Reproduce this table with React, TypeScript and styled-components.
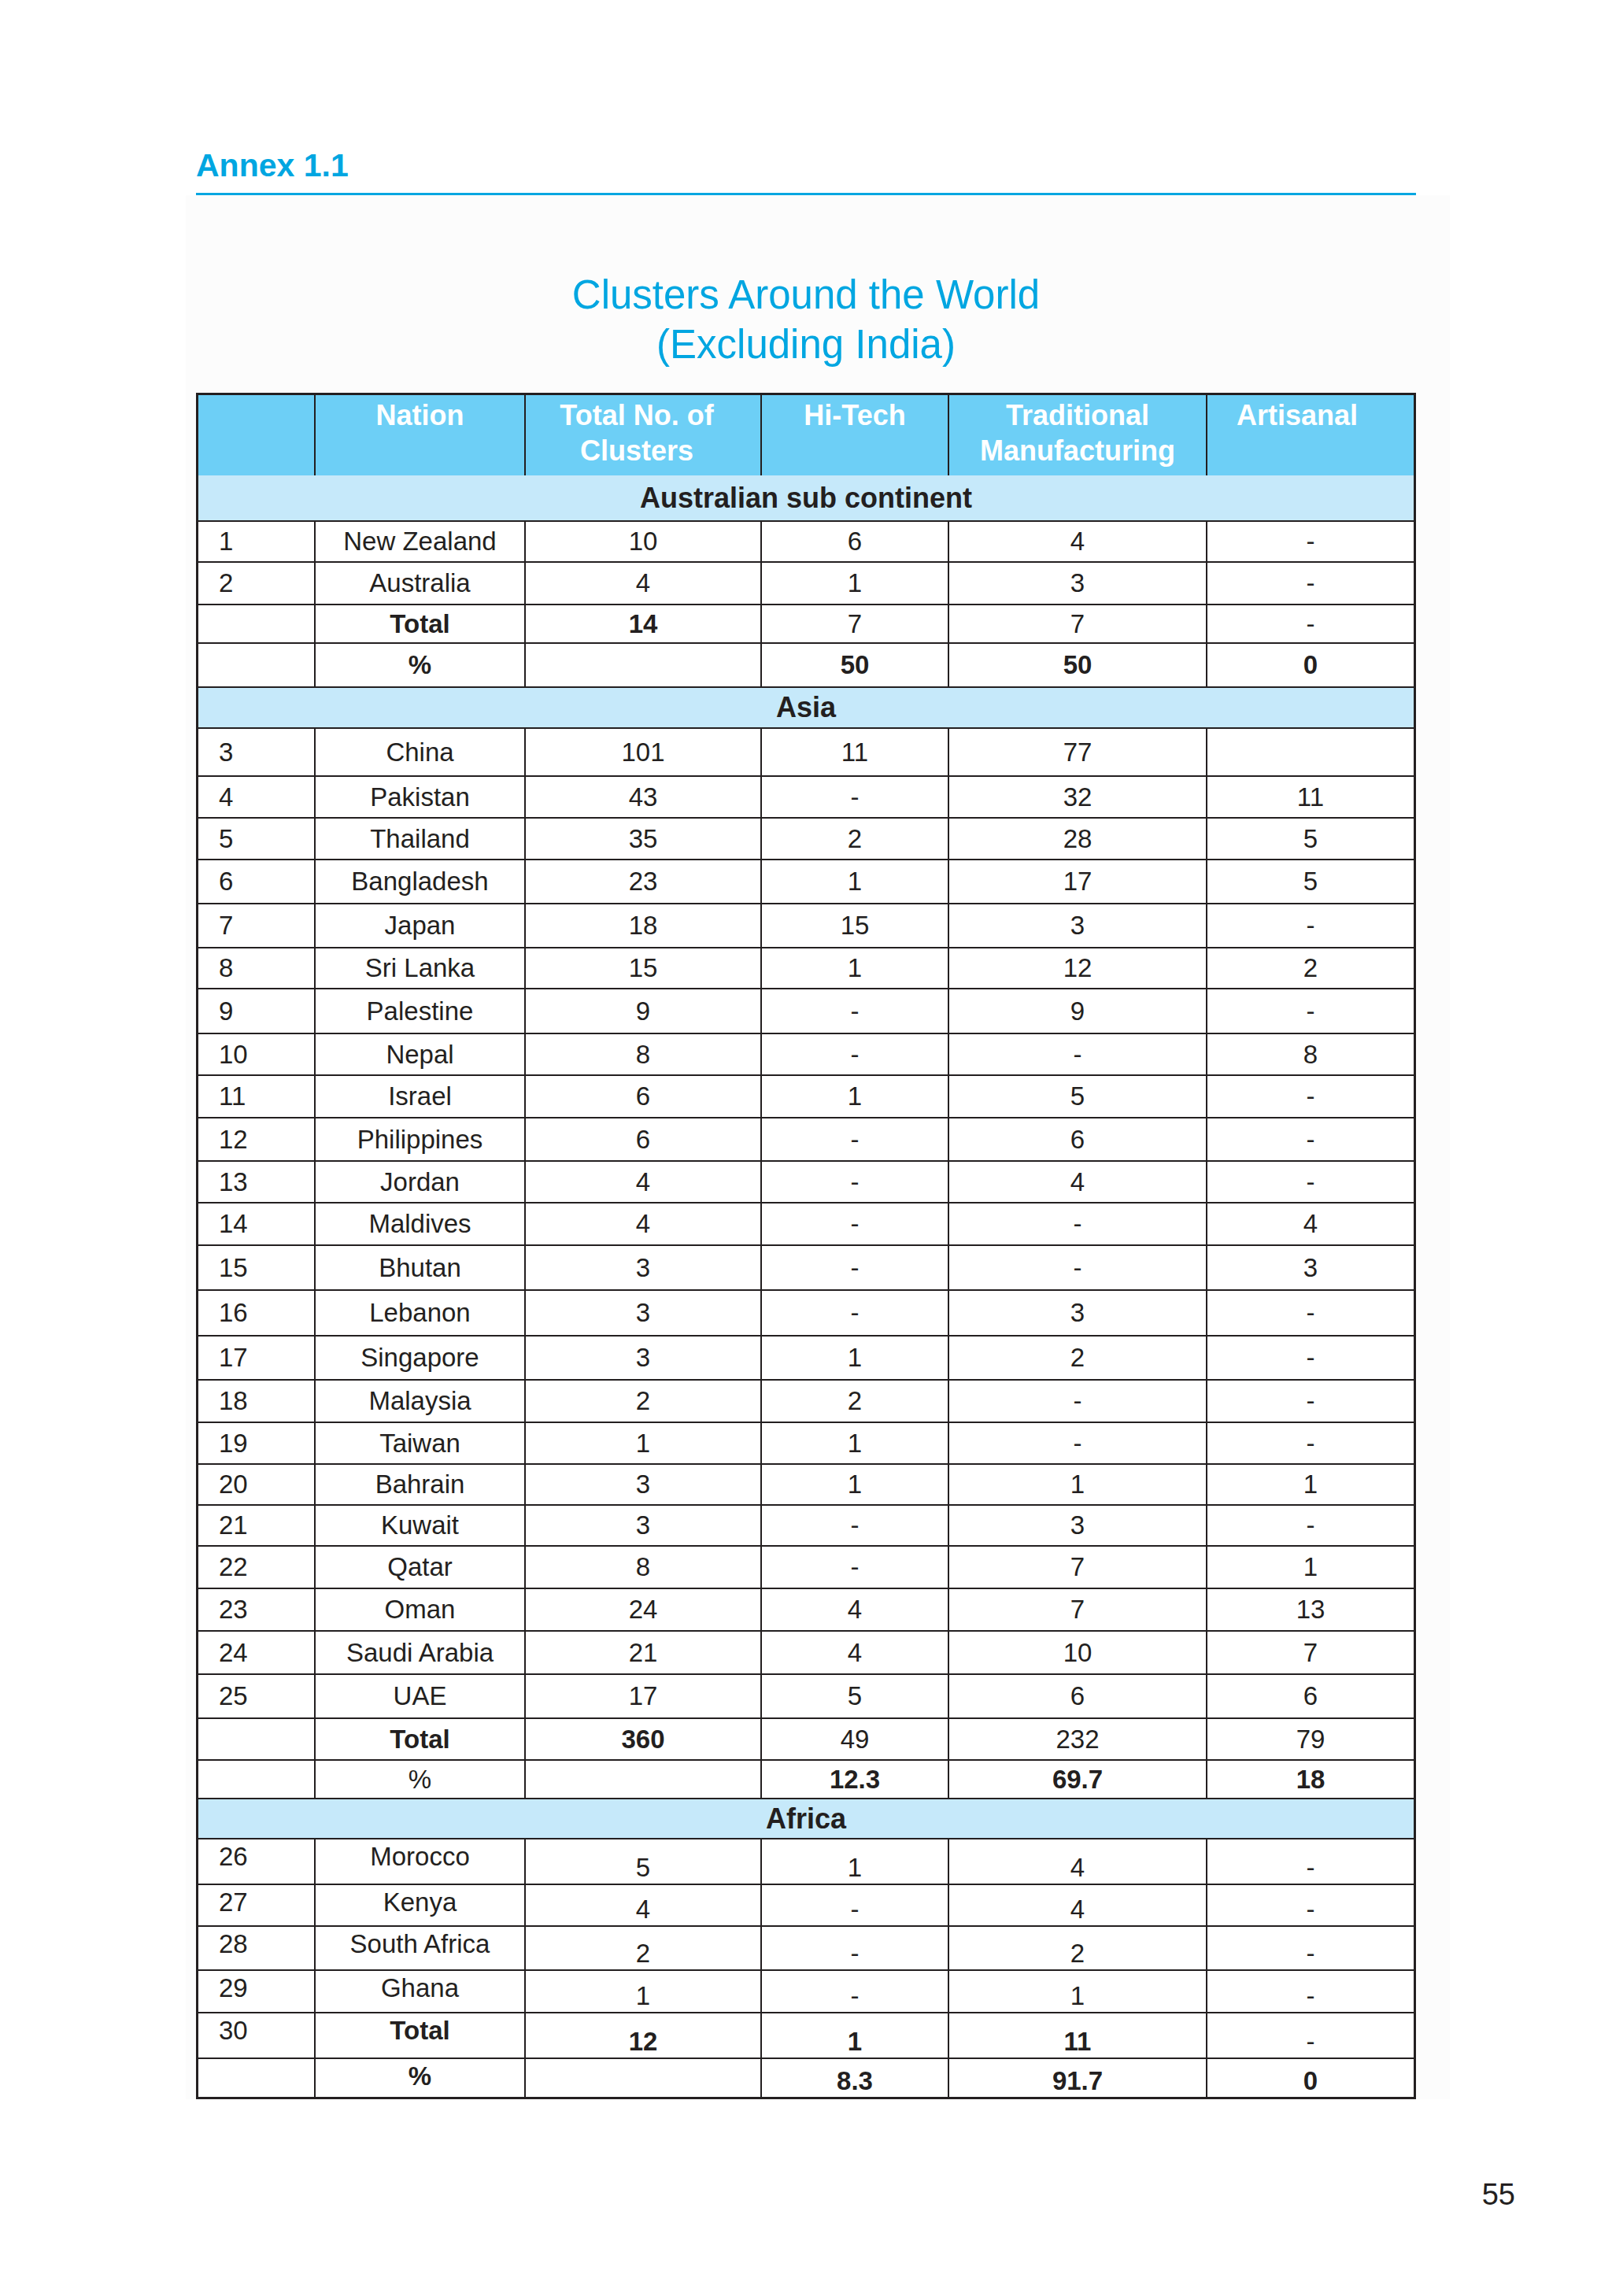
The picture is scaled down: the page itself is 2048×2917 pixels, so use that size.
import React from 'react';
import styled, { createGlobalStyle } from 'styled-components';

type Row = { cells: string[]; h: number; b?: number[] };
type Section = { title: string; h: number; split?: boolean; rows: Row[] };

const ink = '#231f20';
const cyan = '#00a6e1';

const COLS = '149px 267px 300px 238px 328px 262px';

const sections: Section[] = [
  {
    title: 'Australian sub continent',
    h: 59,
    rows: [
      { cells: ['1', 'New Zealand', '10', '6', '4', '-'], h: 52 },
      { cells: ['2', 'Australia', '4', '1', '3', '-'], h: 54 },
      { cells: ['', 'Total', '14', '7', '7', '-'], h: 49, b: [1, 2] },
      { cells: ['', '%', '', '50', '50', '0'], h: 56, b: [1, 3, 4, 5] },
    ],
  },
  {
    title: 'Asia',
    h: 52,
    rows: [
      { cells: ['3', 'China', '101', '11', '77', ''], h: 61 },
      { cells: ['4', 'Pakistan', '43', '-', '32', '11'], h: 53 },
      { cells: ['5', 'Thailand', '35', '2', '28', '5'], h: 53 },
      { cells: ['6', 'Bangladesh', '23', '1', '17', '5'], h: 56 },
      { cells: ['7', 'Japan', '18', '15', '3', '-'], h: 56 },
      { cells: ['8', 'Sri Lanka', '15', '1', '12', '2'], h: 52 },
      { cells: ['9', 'Palestine', '9', '-', '9', '-'], h: 57 },
      { cells: ['10', 'Nepal', '8', '-', '-', '8'], h: 53 },
      { cells: ['11', 'Israel', '6', '1', '5', '-'], h: 54 },
      { cells: ['12', 'Philippines', '6', '-', '6', '-'], h: 55 },
      { cells: ['13', 'Jordan', '4', '-', '4', '-'], h: 53 },
      { cells: ['14', 'Maldives', '4', '-', '-', '4'], h: 54 },
      { cells: ['15', 'Bhutan', '3', '-', '-', '3'], h: 57 },
      { cells: ['16', 'Lebanon', '3', '-', '3', '-'], h: 58 },
      { cells: ['17', 'Singapore', '3', '1', '2', '-'], h: 56 },
      { cells: ['18', 'Malaysia', '2', '2', '-', '-'], h: 54 },
      { cells: ['19', 'Taiwan', '1', '1', '-', '-'], h: 53 },
      { cells: ['20', 'Bahrain', '3', '1', '1', '1'], h: 52 },
      { cells: ['21', 'Kuwait', '3', '-', '3', '-'], h: 52 },
      { cells: ['22', 'Qatar', '8', '-', '7', '1'], h: 54 },
      { cells: ['23', 'Oman', '24', '4', '7', '13'], h: 54 },
      { cells: ['24', 'Saudi Arabia', '21', '4', '10', '7'], h: 55 },
      { cells: ['25', 'UAE', '17', '5', '6', '6'], h: 56 },
      { cells: ['', 'Total', '360', '49', '232', '79'], h: 53, b: [1, 2] },
      { cells: ['', '%', '', '12.3', '69.7', '18'], h: 49, b: [3, 4, 5] },
    ],
  },
  {
    title: 'Africa',
    h: 51,
    split: true,
    rows: [
      { cells: ['26', 'Morocco', '5', '1', '4', '-'], h: 58 },
      { cells: ['27', 'Kenya', '4', '-', '4', '-'], h: 53 },
      { cells: ['28', 'South Africa', '2', '-', '2', '-'], h: 56 },
      { cells: ['29', 'Ghana', '1', '-', '1', '-'], h: 54 },
      { cells: ['30', 'Total', '12', '1', '11', '-'], h: 58, b: [1, 2, 3, 4] },
      { cells: ['', '%', '', '8.3', '91.7', '0'], h: 48, b: [1, 3, 4, 5] },
    ],
  },
];

const headings = [
  { text: '', shift: 0 },
  { text: 'Nation', shift: 0 },
  { text: 'Total No. of Clusters', shift: 8 },
  { text: 'Hi-Tech', shift: 0 },
  { text: 'Traditional Manufacturing', shift: 0 },
  { text: 'Artisanal', shift: 17 },
];

export default function App() {
  return (
    <>
      <GlobalStyle />
      <Page>
        <Content>
          <Annex>Annex 1.1</Annex>
          <Rule />
          <Panel>
            <Title>
              Clusters Around the World
              <br />
              (Excluding India)
            </Title>
            <Table>
              <HeadRow>
                {headings.map((hd, i) => (
                  <HeadCell key={i} $shift={hd.shift}>
                    {hd.text}
                  </HeadCell>
                ))}
              </HeadRow>
              {sections.map((s) => (
                <React.Fragment key={s.title}>
                  <GroupRow $h={s.h}>{s.title}</GroupRow>
                  {s.rows.map((r, ri) => (
                    <BodyRow key={ri} $h={r.h}>
                      {r.cells.map((c, ci) => (
                        <Cell
                          key={ci}
                          $num={ci === 0}
                          $bold={r.b?.includes(ci)}
                          $v={s.split ? (ci < 2 ? 'top' : 'bottom') : 'center'}
                        >
                          {c}
                        </Cell>
                      ))}
                    </BodyRow>
                  ))}
                </React.Fragment>
              ))}
            </Table>
          </Panel>
        </Content>
        <PageNo>55</PageNo>
      </Page>
    </>
  );
}

const GlobalStyle = createGlobalStyle`
  html, body {
    margin: 0;
    padding: 0;
    background: #ffffff;
  }
  body {
    font-family: "Liberation Sans", Arial, sans-serif;
    color: ${ink};
  }
  * { box-sizing: border-box; }
`;

const Page = styled.div`
  width: 2048px;
  min-height: 2917px;
  padding-left: 249px;
  background: #ffffff;
`;

const Content = styled.div`
  width: 1550px;
`;

const Annex = styled.h1`
  margin: 0;
  padding-top: 189px;
  font-size: 41px;
  line-height: 42px;
  font-weight: 700;
  color: ${cyan};
`;

const Rule = styled.div`
  margin-top: 14px;
  height: 3px;
  background: ${cyan};
`;

const Panel = styled.div`
  margin: 0 -43px 0 -13px;
  padding: 0 43px 0 13px;
  background: #fcfcfc;
`;

const Title = styled.h2`
  margin: 0;
  padding-top: 95px;
  padding-bottom: 30px;
  text-align: center;
  font-size: 51px;
  line-height: 63px;
  font-weight: 400;
  color: ${cyan};
`;

const Table = styled.div`
  border: 3px solid ${ink};
  background: #ffffff;
`;

const HeadRow = styled.div`
  display: grid;
  grid-template-columns: ${COLS};
  height: 102px;
  background: #6dcff6;
`;

const HeadCell = styled.div<{ $shift: number }>`
  padding: 3px ${(p) => p.$shift * 2}px 0 0;
  border-right: 2px solid ${ink};
  text-align: center;
  color: #ffffff;
  font-size: 36px;
  line-height: 45px;
  font-weight: 700;

  &:last-child {
    border-right: none;
  }
`;

const GroupRow = styled.div<{ $h: number }>`
  display: flex;
  align-items: center;
  justify-content: center;
  height: ${(p) => p.$h}px;
  border-bottom: 2px solid ${ink};
  background: #c6e9fa;
  font-size: 36px;
  line-height: 40px;
  font-weight: 700;
`;

const BodyRow = styled.div<{ $h: number }>`
  display: grid;
  grid-template-columns: ${COLS};
  height: ${(p) => p.$h}px;
  border-bottom: 2px solid ${ink};

  &:last-child {
    border-bottom: none;
  }
`;

const Cell = styled.div<{ $num?: boolean; $bold?: boolean; $v: 'top' | 'bottom' | 'center' }>`
  display: flex;
  align-items: ${(p) => (p.$v === 'top' ? 'flex-start' : p.$v === 'bottom' ? 'flex-end' : 'center')};
  justify-content: ${(p) => (p.$num ? 'flex-start' : 'center')};
  padding-top: ${(p) => (p.$v === 'top' ? 4 : 0)}px;
  padding-bottom: ${(p) => (p.$v === 'bottom' ? 2 : 0)}px;
  padding-left: ${(p) => (p.$num ? 26 : 0)}px;
  border-right: 2px solid ${ink};
  font-size: 33px;
  line-height: 36px;
  font-weight: ${(p) => (p.$bold ? 700 : 400)};

  &:last-child {
    border-right: none;
  }
`;

const PageNo = styled.div`
  width: 1676px;
  margin-top: 102px;
  text-align: right;
  font-size: 38px;
  line-height: 38px;
`;
